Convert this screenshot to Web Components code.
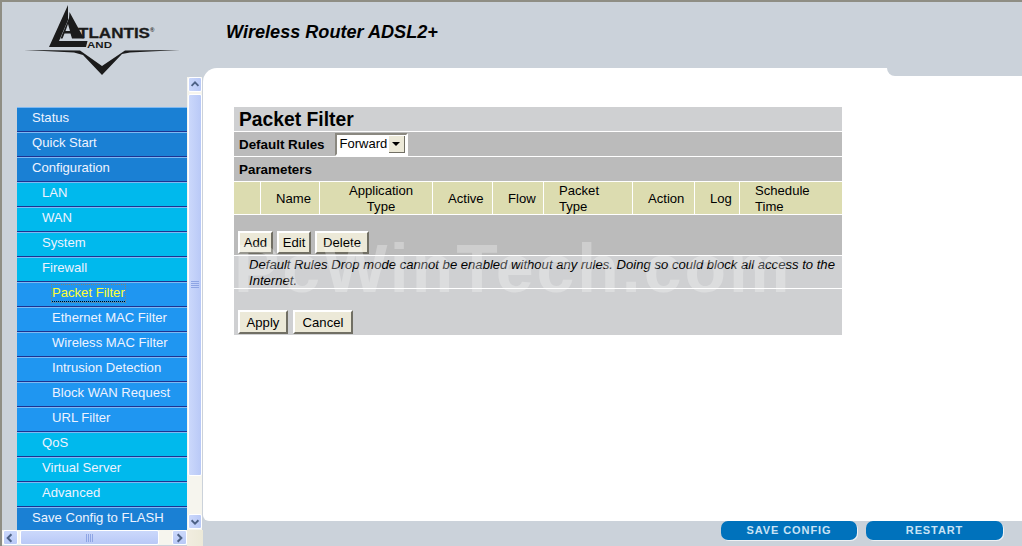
<!DOCTYPE html>
<html>
<head>
<meta charset="utf-8">
<title>Packet Filter</title>
<style>
  html, body { margin: 0; height: 100%; overflow: hidden; background: #cbd2da; }
  body { font-family: "Liberation Sans", Arial, sans-serif; }
</style>
</head>
<body>
<router-app>
  <router-header slot="header" title="Wireless Router ADSL2+"></router-header>
  <router-nav slot="nav">
    <nav-item level="1">Status</nav-item>
    <nav-item level="1">Quick Start</nav-item>
    <nav-item level="1">Configuration</nav-item>
    <nav-item level="2">LAN</nav-item>
    <nav-item level="2">WAN</nav-item>
    <nav-item level="2">System</nav-item>
    <nav-item level="2">Firewall</nav-item>
    <nav-item level="3" current>Packet Filter</nav-item>
    <nav-item level="3">Ethernet MAC Filter</nav-item>
    <nav-item level="3">Wireless MAC Filter</nav-item>
    <nav-item level="3">Intrusion Detection</nav-item>
    <nav-item level="3">Block WAN Request</nav-item>
    <nav-item level="3">URL Filter</nav-item>
    <nav-item level="2">QoS</nav-item>
    <nav-item level="2">Virtual Server</nav-item>
    <nav-item level="2">Advanced</nav-item>
    <nav-item level="1">Save Config to FLASH</nav-item>
  </router-nav>
  <packet-filter slot="main"></packet-filter>
  <footer-button slot="footer" w="136">SAVE CONFIG</footer-button>
  <footer-button slot="footer" w="137">RESTART</footer-button>
</router-app>

<script>
function makeTemplate(html) {
  const template = document.createElement('template');
  template.innerHTML = html;
  return template;
}

class RouterApp extends HTMLElement {
  static template = makeTemplate(`
    <style>
      :host {
        display: grid;
        grid-template-columns: 201px 1fr;
        grid-template-rows: 66px 453px 25px;
        height: 544px;
        border-top: 2px solid #8f8e84;
        border-left: 2px solid #8f8e84;
        background: #cbd2da;
        overflow: hidden;
      }
      .header { grid-column: 1 / 3; }
      .nav { grid-row: 2 / 4; min-height: 0; }
      .main { min-width: 0; min-height: 0; }
      .footer {
        display: flex;
        justify-content: flex-end;
        align-items: flex-start;
        gap: 9px;
        padding-right: 19px;
      }
    </style>
    <div class="header"><slot name="header"></slot></div>
    <div class="nav"><slot name="nav"></slot></div>
    <div class="main"><slot name="main"></slot></div>
    <div class="footer"><slot name="footer"></slot></div>
  `);
  constructor() {
    super();
    this.attachShadow({ mode: 'open' });
    this.shadowRoot.appendChild(RouterApp.template.content.cloneNode(true));
  }
}

class RouterHeader extends HTMLElement {
  constructor() {
    super();
    this.attachShadow({ mode: 'open' }).innerHTML = `
      <style>
        :host { display: flex; height: 66px; align-items: flex-start; }
        svg { display: block; flex: none; margin-left: -2px; margin-top: -2px; }
        h1 {
          margin: 20px 0 0 22px;
          font: italic bold 18.1px/20px "Liberation Sans", Arial, sans-serif;
          color: #000;
          white-space: nowrap;
        }
      </style>
      <svg width="204" height="80" viewBox="0 0 204 80">
        <path fill="#1b1b1b" d="M68 5 L49 47 L86 47 L87.5 41 L59 41 L68 20 Z"/>
        <path fill="#1b1b1b" fill-rule="evenodd" d="M69.5 12 L84 38.5 L72 38.5 L70.5 33.5 L64.5 33.5 L62.5 38.5 L60.5 38.5 L69 18 Z M68 24 L65.5 31 L70 31 Z"/>
        <path fill="#1b1b1b" d="M24 50 L80 50.5 L102 66 L125 50.5 L180 50 L130 52.5 L122 54 L102 75 L83 55 L74 52.5 Z"/>
        <text x="78" y="38" font-family="Liberation Sans, Arial, sans-serif" font-weight="bold" font-size="14.5" textLength="72" lengthAdjust="spacingAndGlyphs" fill="#1b1b1b" stroke="#1b1b1b" stroke-width=".3">TLANTIS</text>
        <text x="87" y="47.5" font-family="Liberation Sans, Arial, sans-serif" font-weight="bold" font-size="9.5" textLength="25" lengthAdjust="spacingAndGlyphs" fill="#1b1b1b">AND</text>
        <text x="150" y="32" font-family="Liberation Sans, Arial, sans-serif" font-weight="bold" font-size="6" fill="#333">®</text>
      </svg>
      <h1>${this.getAttribute('title')}</h1>
    `;
  }
}

class ScrollBar extends HTMLElement {
  constructor() {
    super();
    const vertical = this.getAttribute('orient') === 'vertical';
    const chevron = dir => {
      const d = { up: 'M3 8 L7 4 L11 8', down: 'M3 5 L7 9 L11 5', left: 'M8 3 L4 7 L8 11', right: 'M5 3 L9 7 L5 11' }[dir];
      return `<svg width="14" height="14" viewBox="0 0 14 14"><path d="${d}" fill="none" stroke="#4d6185" stroke-width="2.2"/></svg>`;
    };
    const grip = vertical
      ? '<svg width="8" height="8"><path d="M0 .5H8M0 2.5H8M0 4.5H8M0 6.5H8" stroke="#8ea5e4"/></svg>'
      : '<svg width="8" height="8"><path d="M.5 0V8M2.5 0V8M4.5 0V8M6.5 0V8" stroke="#8ea5e4"/></svg>';
    this.attachShadow({ mode: 'open' }).innerHTML = `
      <style>
        :host {
          display: flex;
          flex-direction: ${vertical ? 'column' : 'row'};
          background: #f6f5ee;
          ${vertical ? 'width: 15px; height: 453px; padding-left: 1px; box-sizing: border-box;' : 'height: 15px; align-items: stretch;'}
        }
        .btn, .thumb {
          box-sizing: border-box;
          border: 1px solid #fff;
          border-radius: 2px;
          background: linear-gradient(${vertical ? '90deg' : '180deg'}, #cbd8fb, #b9c9f7);
          display: flex;
          align-items: center;
          justify-content: center;
          flex: none;
        }
        .btn { width: ${vertical ? '14px' : '15px'}; height: 15px; }
        .thumb { ${vertical ? 'width: 14px; height: 382px; margin: 2px 0 38px;' : 'height: 15px; width: 139px; margin: 0 13px 0 2px;'} }
      </style>
      <div class="btn">${chevron(vertical ? 'up' : 'left')}</div>
      <div class="thumb">${grip}</div>
      <div class="btn">${chevron(vertical ? 'down' : 'right')}</div>
    `;
  }
}

class RouterNav extends HTMLElement {
  constructor() {
    super();
    this.attachShadow({ mode: 'open' }).innerHTML = `
      <style>
        :host {
          display: grid;
          grid-template-columns: 185px 16px;
          grid-template-rows: 453px 16px;
          padding-top: 9px;
        }
        .pane { overflow: hidden; padding: 30px 0 0 15px; box-sizing: border-box; height: 453px; }
        .corner { background: linear-gradient(90deg, #f1ede0, #ece9d8); }
        scroll-bar[orient=horizontal] { padding: 0 1px; }
      </style>
      <div class="pane"><slot></slot></div>
      <scroll-bar orient="vertical"></scroll-bar>
      <scroll-bar orient="horizontal"></scroll-bar>
      <div class="corner"></div>
    `;
  }
}

class NavItem extends HTMLElement {
  constructor() {
    super();
    const level = this.getAttribute('level');
    const bg = { 1: '#1a80d4', 2: '#00b9ed', 3: '#1f96f1' }[level];
    const pad = { 1: 15, 2: 25, 3: 35 }[level];
    this.attachShadow({ mode: 'open' }).innerHTML = `
      <style>
        :host {
          display: flex;
          align-items: center;
          box-sizing: border-box;
          height: 25px;
          padding: 0 0 3px ${pad}px;
          background: ${bg};
          border-top: 1px solid #7eb9f2;
          border-bottom: 1px solid #1c3391;
          color: #eef3ff;
          font: 13.1px/16px "Liberation Sans", Arial, sans-serif;
          white-space: nowrap;
        }
        :host([current]) span {
          color: #ffff33;
          outline: 1px dotted rgba(200, 120, 40, 0.6);
          border-bottom: 1px dotted #000;
          margin-bottom: -1px;
        }
      </style>
      <span><slot></slot></span>
    `;
  }
}

class PushButton extends HTMLElement {
  constructor() {
    super();
    const h = this.getAttribute('h') || 23;
    this.attachShadow({ mode: 'open' }).innerHTML = `
      <style>
        :host {
          display: inline-flex;
          align-items: center;
          justify-content: center;
          box-sizing: border-box;
          height: ${h}px;
          width: ${this.getAttribute('w')}px;
          padding-top: ${h == 24 ? 1 : 0}px;
          background: #ece9d8;
          border: 2px solid;
          border-color: #fff #716f64 #716f64 #fff;
          color: #000;
          font: 13.1px/16px "Liberation Sans", Arial, sans-serif;
        }
      </style>
      <slot></slot>
    `;
  }
}

class RuleSelect extends HTMLElement {
  constructor() {
    super();
    this.attachShadow({ mode: 'open' }).innerHTML = `
      <style>
        :host {
          display: flex;
          align-items: center;
          box-sizing: border-box;
          width: 73px;
          height: 23px;
          background: #fff;
          border: 2px solid;
          border-color: #8a8880 #fff #fff #8a8880;
          color: #000;
          font: normal 13px/16px "Liberation Sans", Arial, sans-serif;
          padding-left: 3px;
          justify-content: space-between;
        }
        .arrow {
          display: flex;
          flex: none;
          align-items: center;
          justify-content: center;
          width: 16px;
          height: 17px;
          margin-right: 1px;
          background: #ece9d8;
          border-right: 1px solid #716f64;
          border-bottom: 1px solid #716f64;
          box-sizing: border-box;
        }
        .arrow i { border: 4px solid transparent; border-top: 4px solid #000; border-bottom: 0; }
      </style>
      <slot></slot><span class="arrow"><i></i></span>
    `;
  }
}

class FooterButton extends HTMLElement {
  constructor() {
    super();
    this.attachShadow({ mode: 'open' }).innerHTML = `
      <style>
        :host {
          display: flex;
          align-items: center;
          justify-content: center;
          width: ${this.getAttribute('w')}px;
          height: 19px;
          border-radius: 7px;
          background: #0072bc;
          box-shadow: 1px 1px 0 #eef1f4;
          color: #c9e3f5;
          font: bold 11px/13px "Liberation Sans", Arial, sans-serif;
          letter-spacing: 0.9px;
        }
      </style>
      <slot></slot>
    `;
  }
}

class PacketFilter extends HTMLElement {
  constructor() {
    super();
    const cols = [
      [27, ''], [59, 'Name'], [113, '<span class="c">Application<br>Type</span>', 29],
      [60, 'Active'], [51, 'Flow'], [89, 'Packet<br>Type'], [62, 'Action'], [45, 'Log'], [102, 'Schedule<br>Time']
    ];
    const cells = cols.map(([w, html, left]) =>
      `<div class="cell" style="width:${w}px;padding-left:${left || (html ? 15 : 0)}px"><span>${html}</span></div>`).join('');
    this.attachShadow({ mode: 'open' }).innerHTML = `
      <style>
        :host {
          display: block;
          height: 453px;
          box-sizing: border-box;
          background: #fff;
          border-radius: 14px 0 0 6px;
          font: 13.1px/16px "Liberation Sans", Arial, sans-serif;
          color: #000;
        }
        .notch { height: 8px; display: flex; justify-content: flex-end; }
        .notch div { width: 135px; background: #cbd2da; border-radius: 0 0 0 8px; }
        .content { padding: 31px 0 0 31px; }
        .table { position: relative; width: 608px; display: flex; flex-direction: column; gap: 1px; overflow: hidden; }
        .row { display: flex; align-items: center; padding-left: 5px; box-sizing: border-box; }
        .title { height: 24px; background: #cfd0d2; font: bold 19.3px/24px "Liberation Sans", Arial, sans-serif; padding: 1px 0 0 5px; }
        .bar { height: 24px; background: #bbbbbb; font-weight: bold; font-size: 13.4px; padding-top: 1px; }
        .bar rule-select { margin: -1px 0 0 10px; }
        .head { height: 32px; background: #dcdcb0; padding: 0; }
        .cell { flex: none; box-sizing: border-box; border-right: 1px solid #fff; height: 32px; display: flex; align-items: center; line-height: 16px; padding-top: 2px; }
        .cell:last-child { border-right: 0; flex: 1; }
        .c { display: block; text-align: center; }
        .actions { height: 40px; background: #bbbbbb; align-items: flex-end; gap: 4px; padding: 0 0 1px 4px; }
        .note { height: 32px; background: #cfd0d2; padding: 2px 4px 0 15px; font-style: italic; }
        .bottom { height: 46px; background: #cfd0d2; align-items: flex-end; gap: 5px; padding: 0 0 1px 4px; }
        .mark {
          position: absolute;
          left: 0;
          top: 122px;
          font: bold 68px/78px "Liberation Sans", Arial, sans-serif;
          color: rgba(255, 255, 255, 0.28);
          white-space: nowrap;
          letter-spacing: 3px;
        }
      </style>
      <div class="notch"><div></div></div>
      <div class="content">
        <div class="table">
          <div class="row title">Packet Filter</div>
          <div class="row bar">Default Rules<rule-select>Forward</rule-select></div>
          <div class="row bar">Parameters</div>
          <div class="row head">${cells}</div>
          <div class="row actions">
            <push-button w="35">Add</push-button>
            <push-button w="34">Edit</push-button>
            <push-button w="54">Delete</push-button>
          </div>
          <div class="row note">Default Rules Drop mode cannot be enabled without any rules. Doing so could block all access to the Internet.</div>
          <div class="row bottom">
            <push-button w="50" h="24">Apply</push-button>
            <push-button w="60" h="24">Cancel</push-button>
          </div>
          <div class="mark">PcWinTech.com</div>
        </div>
      </div>
    `;
  }
}

customElements.define('scroll-bar', ScrollBar);
customElements.define('nav-item', NavItem);
customElements.define('push-button', PushButton);
customElements.define('rule-select', RuleSelect);
customElements.define('footer-button', FooterButton);
customElements.define('packet-filter', PacketFilter);
customElements.define('router-header', RouterHeader);
customElements.define('router-nav', RouterNav);
customElements.define('router-app', RouterApp);
</script>
</body>
</html>
